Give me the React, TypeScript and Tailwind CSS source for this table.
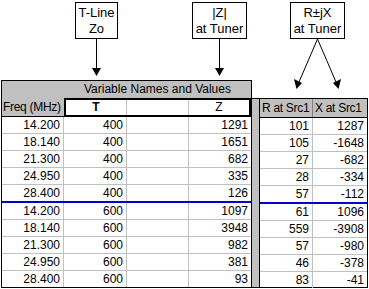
import React from "react";

const rows: [string, string, string, string, string][] = [
  ["14.200", "400", "1291", "101", "1287"],
  ["18.140", "400", "1651", "105", "-1648"],
  ["21.300", "400", "682", "27", "-682"],
  ["24.950", "400", "335", "28", "-334"],
  ["28.400", "400", "126", "57", "-112"],
  ["14.200", "600", "1097", "61", "1096"],
  ["18.140", "600", "3948", "559", "-3908"],
  ["21.300", "600", "982", "57", "-980"],
  ["24.950", "600", "381", "46", "-378"],
  ["28.400", "600", "93", "83", "-41"],
];

function rowBorder(i: number) {
  if (i === 4) return "border-b-2 border-b-[#0000cc]";
  if (i === 9) return "";
  return "border-b border-b-[#c0c0c0]";
}

function Callout({ a, b, cls }: { a: string; b: string; cls: string }) {
  return (
    <div
      className={`absolute top-[2px] h-[37px] border border-black bg-white flex flex-col items-center justify-center text-[13px] leading-[16px] text-black whitespace-nowrap ${cls}`}
    >
      <div>{a}</div>
      <div>{b}</div>
    </div>
  );
}

export default function App() {
  return (
    <div
      className="relative w-[369px] h-[289px] bg-white overflow-hidden text-black"
      style={{ fontFamily: '"Liberation Sans", Arial, sans-serif' }}
    >
      <div className="relative h-[80px]">
        <Callout a="T-Line" b="Zo" cls="left-[75px] w-[43px]" />
        <Callout a="|Z|" b="at Tuner" cls="left-[192px] w-[55px]" />
        <Callout a="R±jX" b="at Tuner" cls="left-[290px] w-[55px]" />
      </div>

      <div className="flex text-[12px] leading-[16px] whitespace-nowrap">
        {/* left table */}
        <div className="ml-px w-[251px] h-[208px] border border-black flex flex-col">
          <div className="h-[17px] bg-[#c0c0c0] flex">
            <div className="w-[62px]" />
            <div className="flex-1 text-center leading-[17px]">Variable Names and Values</div>
          </div>
          <div className="h-[19px] flex">
            <div className="w-[62px] bg-[#c0c0c0] border-b border-b-black pl-[1px] leading-[19px] tracking-[-0.3px] overflow-hidden">
              Freq (MHz)
            </div>
            <div className="flex-1 flex border-2 border-black bg-white">
              <div className="w-[61px] border-r border-r-[#c0c0c0] text-center leading-[15px] font-bold">T</div>
              <div className="w-[62px] border-r border-r-[#c0c0c0]" />
              <div className="flex-1 text-center leading-[15px]">Z</div>
            </div>
          </div>
          {rows.map((r, i) => (
            <div key={i} className={`flex ${rowBorder(i)}`}>
              <div className="w-[62px] h-[16px] border-r border-r-[#c0c0c0] text-right pr-[3px]">{r[0]}</div>
              <div className="w-[63px] h-[16px] border-r border-r-[#c0c0c0] text-right pr-[3px]">{r[1]}</div>
              <div className="w-[62px] h-[16px] border-r border-r-[#c0c0c0]" />
              <div className="flex-1 h-[16px] text-right pr-[3px]">{r[2]}</div>
            </div>
          ))}
        </div>

        {/* right part */}
        <div className="mt-[18px] w-[116px] h-[190px] border-t border-b border-r border-black flex">
          <div className="w-[8px] bg-[#c0c0c0] border-r border-r-black" />
          <div className="flex-1 flex flex-col">
            <div className="h-[19px] flex bg-[#c0c0c0] border-b border-b-black">
              <div className="w-[53px] border-r border-r-[#808080] pl-[2px] leading-[18px] tracking-[-0.3px] overflow-hidden">R at Src1</div>
              <div className="flex-1 pl-[2px] leading-[18px] tracking-[-0.3px] overflow-hidden">X at Src1</div>
            </div>
            {rows.map((r, i) => (
              <div key={i} className={`flex ${rowBorder(i)}`}>
                <div className="w-[53px] h-[16px] border-r border-r-[#c0c0c0] text-right pr-[3px]">{r[3]}</div>
                <div className="flex-1 h-[16px] text-right pr-[3px]">{r[4]}</div>
              </div>
            ))}
          </div>
        </div>
      </div>

      <svg className="absolute left-0 top-0 pointer-events-none" width="369" height="289">
        <line x1="96.5" y1="39" x2="96.5" y2="70" stroke="black" strokeWidth="1" />
        <polygon points="92,68 101,68 96.5,76" fill="black" />
        <line x1="219.5" y1="39" x2="219.5" y2="70" stroke="black" strokeWidth="1" />
        <polygon points="215,68 224,68 219.5,76" fill="black" />
        <line x1="317.5" y1="39" x2="299" y2="82" stroke="black" strokeWidth="1" />
        <polygon points="294,79 302,83 296.5,89" fill="black" />
        <line x1="317.5" y1="39" x2="336" y2="82" stroke="black" strokeWidth="1" />
        <polygon points="333,83 341,79 338.5,89" fill="black" />
      </svg>
    </div>
  );
}
